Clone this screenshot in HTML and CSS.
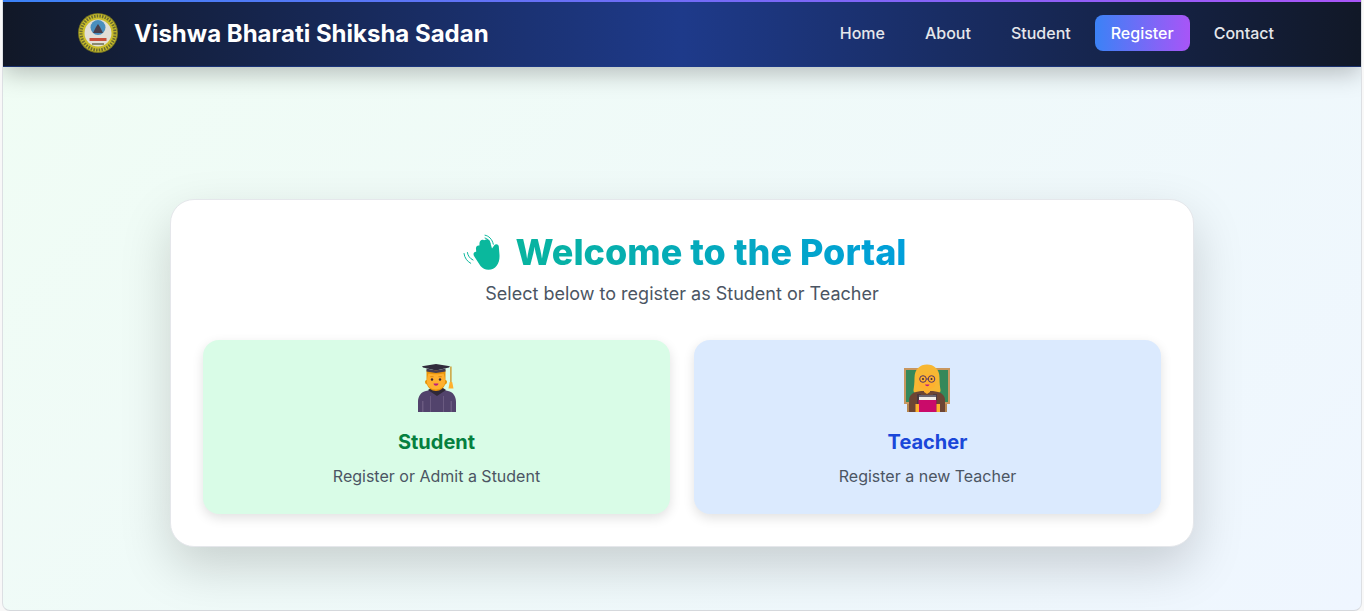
FILE: index.html
```html
<!DOCTYPE html>
<html lang="en">
<head>
<meta charset="utf-8">
<title>Vishwa Bharati Shiksha Sadan</title>
<link rel="stylesheet" href="styles.css">
</head>
<body>
<div class="window">
  <nav class="navbar">
    <div class="brand">
      <svg class="logo" viewBox="0 0 40 40" aria-hidden="true">
        <circle cx="20" cy="20" r="20" fill="#7d7a22"/>
        <circle cx="20" cy="20" r="19" fill="#c9bd2a"/>
        <circle cx="20" cy="20" r="17" fill="none" stroke="#6a6a30" stroke-width="3" stroke-dasharray="1.5 1.2"/>
        <circle cx="20" cy="20" r="13.500" fill="#e2dfd6"/>
        <circle cx="20" cy="14.500" r="7.500" fill="#4a8fbd"/>
        <path d="M15 20l3-6 2-3 2 3 3 6z" fill="#4a3f4a"/>
        <path d="M11.500 25h17v3h-17z" fill="#c8503a"/>
        <path d="M14 30h12v2H14z" fill="#8a8a70"/>
      </svg>
      <span class="brand-name">Vishwa Bharati Shiksha Sadan</span>
    </div>
    <ul class="nav-links">
      <li class="nav-item">Home</li>
      <li class="nav-item">About</li>
      <li class="nav-item">Student</li>
      <li class="nav-item nav-item-active">Register</li>
      <li class="nav-item">Contact</li>
    </ul>
  </nav>
  <main class="content">
    <section class="panel">
      <h1 class="title">
        <svg class="wave" viewBox="-1 0 44 44" aria-hidden="true">
          <path fill="#0ab89d" d="M16 26C14.800 23.800 16 21.600 18.200 21.800L18 19C17.600 16.600 19.600 14.800 21.400 15.600L21.500 13C21.700 10.400 24 9 26 10.300L28 9.500C30 8.700 31.500 9.800 32 11.500L34 18.500L36.300 15.300C37.700 13.500 40.500 14.200 40.800 16.500L41.500 25C42 33 38 39.800 30.500 39.800C27 39.800 24.500 38.300 22.500 36z"/>
          <g fill="none" stroke="#0ab89d" stroke-width="1" stroke-linecap="round">
            <path d="M27 5.200c3.700.5 7.300 4 8.300 9"/>
            <path d="M27 8c2.500.4 4.300 2.500 5 5.400"/>
            <path d="M6 23.500c.5 4.300 3.200 8 6.700 9.800"/>
            <path d="M9.400 22.500c.4 3.200 2.500 6.100 5.600 7.500"/>
          </g>
        </svg>
        <span class="title-text">Welcome to the Portal</span>
      </h1>
      <p class="subtitle">Select below to register as Student or Teacher</p>
      <div class="cards">
        <article class="card card-student">
          <svg class="figure" viewBox="0 0 48 48" aria-hidden="true">
            <path fill="#52436c" d="M5 48V38c0-6 3-10 8-11l4-1h14l4 1c5 1 8 5 8 11v10z"/>
            <path fill="#6a5a80" d="M9 48V37h1.500v11zM37.500 48V37H39v11zM17 32h1v16h-1zM30 32h1v16h-1z"/>
            <path fill="#2f2838" d="M15 26l9 6 9-6-3-2H18z"/>
            <path fill="#e8950a" d="M13.500 6h19v10c1 0 1.500 1 1.500 2s-1 2.500-2 2.500C31 24 27.500 27 23 27s-8-3-9-6.500c-1 0-2-1.500-2-2.500s.5-2 1.500-2z"/>
            <path fill="#ffb02e" d="M15.500 9.500c3 1 12 1 15 0 1 2 1.500 5 1.500 8.500 0 4-4 7.500-9 7.500S14 22 14 18c0-3.500.5-6.500 1.500-8.500z"/>
            <circle cx="19" cy="15.500" r="1.200" fill="#402a32"/>
            <circle cx="27" cy="15.500" r="1.200" fill="#402a32"/>
            <path fill="none" stroke="#d67d00" stroke-width=".8" d="M17.300 12.700h3.200M25.500 12.700h3.200"/>
            <path fill="#bb1d80" d="M20.500 19.500h5c-.4 1.600-1.300 2.200-2.500 2.200s-2.100-.6-2.500-2.200z"/>
            <path fill="#312b3c" d="M9 2.200 23 0l14 2.200-1 1.300L23 6.500 10 3.500z"/>
            <path fill="#453e52" d="M13.500 4.500 23 6.500l9.500-2v3L23 9l-9.500-1.500z"/>
            <path fill="#c98a10" d="M37.300 2.500h1.200v16h-1.200z"/>
            <path fill="#ffb02e" d="M36.700 18h2.500l1.300 6.500h-5z"/>
          </svg>
          <h2 class="card-title card-title-student">Student</h2>
          <p class="card-text">Register or Admit a Student</p>
        </article>
        <article class="card card-teacher">
          <svg class="figure" viewBox="1 0 48 48" aria-hidden="true">
            <path fill="#c8975f" d="M1 4h46v36H1z"/>
            <path fill="#35885a" d="M3 6h42v32H3z"/>
            <path fill="#b8874f" d="M4 40h3v8H4zM41 40h3v8h-3z"/>
            <path fill="#f7b733" d="M11.500 14C11.500 5 17 .5 24 .5S36.500 5 36.500 14c0 5 .5 9 1 12 .3 2-1 3-3 3h-21c-2 0-3.300-1-3-3 .5-3 1-7 1-12z"/>
            <path fill="#6d4534" d="M6 48V36c0-4 3-7 7-8l5-1h12l5 1c4 1 7 4 7 8v12z"/>
            <path fill="#ffb02e" d="M15.500 10h17v8.500c0 4-3.800 7-8.500 7s-8.500-3-8.500-7z"/>
            <path fill="#f7b733" d="M15 13c4 0 9-2 11-5l-9-1zM33 13c-3 0-5-2-7-5l7 1z"/>
            <g fill="none" stroke="#533566" stroke-width="1">
              <circle cx="20" cy="15" r="3.300"/>
              <circle cx="28.500" cy="15" r="3.300"/>
              <path d="M23.300 15h2"/>
            </g>
            <circle cx="20" cy="15" r="1" fill="#402a32"/>
            <circle cx="28.500" cy="15" r="1" fill="#402a32"/>
            <path fill="#bb1d80" d="M22 20.500h4.500c-.4 1.200-1.200 1.700-2.200 1.700s-1.900-.5-2.300-1.700z"/>
            <path fill="#ffb02e" d="M21 24h6v4l-3 2-3-2z"/>
            <path fill="#4a3a40" d="M14 30h4v18h-4zM30 30h4v18h-4z"/>
            <path fill="#6b6673" d="M16 31h17v2H16z"/>
            <path fill="#f3eee8" d="M16 33h17v3H16z"/>
            <path fill="#ca0b6a" d="M15.500 36H33.500v12H15.500z"/>
            <path fill="#ffb02e" d="M12.500 40h3.500v8h-3.500zM33.500 40H37v8h-3.500z"/>
          </svg>
          <h2 class="card-title card-title-teacher">Teacher</h2>
          <p class="card-text">Register a new Teacher</p>
        </article>
      </div>
    </section>
  </main>
</div>
</body>
</html>
```

FILE: styles.css
```css
* { box-sizing: border-box; }
html, body { height: 100%; }
body {
  margin: 0;
  background: #f8f8f8;
  font-family: Inter, "Liberation Sans", sans-serif;
  overflow: hidden;
}
.window {
  height: 611px;
  margin: 0 2px;
  border-left: 1px solid #dcdfe3;
  border-right: 1px solid #dcdfe3;
  border-bottom: 1px solid #d5d8dc;
  border-radius: 0 0 8px 8px;
  background: linear-gradient(135deg, #f0fdf4 0%, #eff6ff 100%);
  display: flex;
  flex-direction: column;
  overflow: hidden;
}
.navbar {
  flex: none;
  height: 67px;
  padding: 0 71px 0 75px;
  display: flex;
  align-items: center;
  justify-content: space-between;
  background: linear-gradient(90deg, #111827 0%, #1e3a8a 50%, #111827 100%);
  border-bottom: 1px solid rgba(30, 58, 138, 0.7);
  box-shadow: 0 6px 25px rgba(0, 0, 0, 0.25);
  position: relative;
}
.navbar::before {
  content: "";
  position: absolute;
  top: 0;
  left: 0;
  right: 0;
  height: 2px;
  background: linear-gradient(90deg, #3b82f6, #a855f7);
}
.brand { display: flex; align-items: center; gap: 16px; }
.logo { width: 40px; height: 40px; display: block; }
.brand-name {
  font-size: 24px;
  font-weight: 700;
  color: #fff;
}
.nav-links {
  list-style: none;
  display: flex;
  gap: 8px;
  margin: 0;
  padding: 0;
}
.nav-item {
  padding: 8px 16px;
  font-size: 16px;
  line-height: 20px;
  font-weight: 550;
  color: #e5e7eb;
  border-radius: 8px;
}
.nav-item-active {
  color: #fff;
  background: linear-gradient(90deg, #3b82f6, #a855f7);
}
.content {
  flex: 1;
  display: flex;
  align-items: center;
  justify-content: center;
  padding-top: 68px;
}
.panel {
  width: 1024px;
  padding: 32px;
  background: #fff;
  border-radius: 24px;
  border: 1px solid #e5e7eb;
  box-shadow: 0 20px 50px rgba(0, 0, 0, 0.17);
  text-align: center;
}
.title {
  margin: 0;
  display: flex;
  align-items: center;
  justify-content: center;
  gap: 14px;
  height: 40px;
  font-size: 36px;
  line-height: 40px;
  font-weight: 800;
}
.wave { width: 44px; height: 44px; display: block; flex: none; }
.title-text {
  background: linear-gradient(90deg, #08b49f, #009fdb);
  -webkit-background-clip: text;
  background-clip: text;
  color: transparent;
}
.subtitle {
  margin: 8px 0 0;
  font-size: 18px;
  line-height: 28px;
  color: #4b5563;
}
.cards {
  display: grid;
  grid-template-columns: 1fr 1fr;
  gap: 24px;
  margin-top: 32px;
}
.card {
  height: 174px;
  padding: 24px;
  border-radius: 16px;
  box-shadow: 0 4px 12px rgba(0, 0, 0, 0.12);
  display: flex;
  flex-direction: column;
  align-items: center;
}
.card-student { background: #d9fce7; }
.card-teacher { background: #dbeafe; }
.figure { width: 48px; height: 48px; display: block; }
.card-title {
  margin: 16px 0 0;
  font-size: 20px;
  line-height: 28px;
  font-weight: 700;
}
.card-title-student { color: #05803f; }
.card-title-teacher { color: #1a47d9; }
.card-text {
  margin: 8px 0 0;
  font-size: 16px;
  line-height: 24px;
  color: #4b5563;
}
```
